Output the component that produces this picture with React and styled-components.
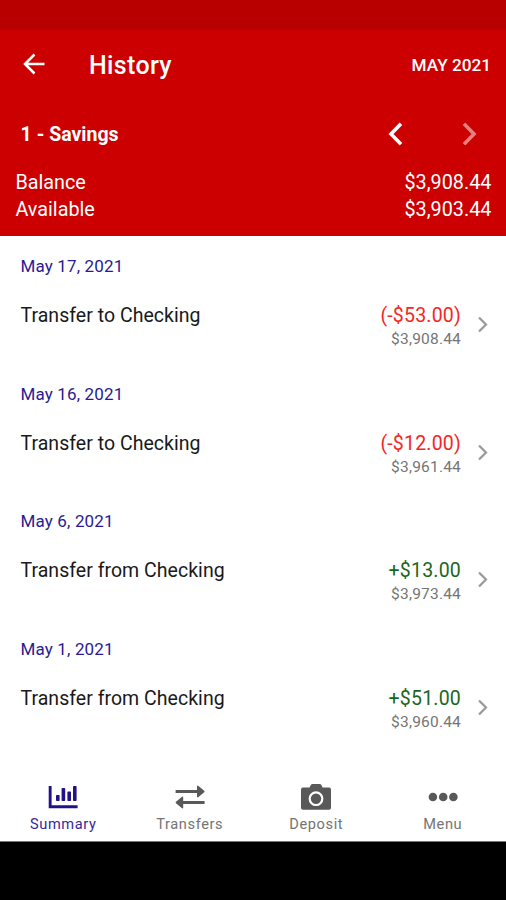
import React from 'react'
import styled, { createGlobalStyle } from 'styled-components'

const GlobalStyle = createGlobalStyle`
  * {
    box-sizing: border-box;
  }

  body {
    margin: 0;
    background: #000;
    font-family: Roboto, "Liberation Sans", sans-serif;
  }
`

const Screen = styled.div`
  display: flex;
  flex-direction: column;
  width: 506px;
  height: 900px;
  background: #fff;
  overflow: hidden;
`

const StatusBar = styled.div`
  height: 30px;
  background: #b90000;
`

const Header = styled.header`
  height: 206px;
  background: #cc0000;
  color: #fff;
`

const TitleBar = styled.div`
  display: flex;
  align-items: center;
  height: 70px;
  padding: 0 15px 0 23px;

  svg {
    margin-top: -2px;
  }
`

const Title = styled.h1`
  margin: 1px 0 0 44px;
  font-size: 25px;
  font-weight: 500;
  line-height: 30px;
  letter-spacing: 0.35px;
`

const Month = styled.span`
  margin: 0 0 0 auto;
  font-size: 17.2px;
  font-weight: 500;
`

const AccountBar = styled.div`
  display: flex;
  align-items: center;
  height: 69px;
  padding: 0 29px 1px 20.6px;

  svg + svg {
    margin-left: 59px;
    opacity: 0.5;
  }
`

const AccountName = styled.h2`
  flex: 1;
  margin: 0;
  font-size: 19.5px;
  font-weight: 700;
`

const BalanceLine = styled.div`
  display: flex;
  justify-content: space-between;
  padding: 0 14.6px 0 15.4px;
  font-size: 19.8px;
  line-height: 27px;
`

const History = styled.main`
  flex: 1;
`

const Entry = styled.section`
  height: 127.5px;
  padding: 18px 18px 0 20.5px;
`

const EntryDate = styled.div`
  font-size: 17px;
  line-height: 24px;
  letter-spacing: 0.15px;
  color: #2a1b91;
`

const EntryRow = styled.div`
  display: flex;
  margin-top: 24px;
`

const Description = styled.div`
  flex: 1;
  padding-top: 1px;
  font-size: 19.5px;
  line-height: 25px;
  letter-spacing: 0.03px;
  color: #191919;
`

const Figures = styled.div`
  text-align: right;
`

const Amount = styled.div`
  padding-top: 1px;
  font-size: 19.5px;
  line-height: 25px;
  letter-spacing: 0.2px;
  color: ${({ $credit }) => ($credit ? '#1b661d' : '#f52626')};
`

const Running = styled.div`
  font-size: 15.5px;
  line-height: 22px;
  letter-spacing: 0.2px;
  color: #757575;
`

const RowChevron = styled.svg`
  margin: 14px 0 0 16px;
`

const TabBar = styled.nav`
  display: flex;
  height: 74px;
  border-bottom: 1px solid #777;
`

const Tab = styled.div`
  flex: 1;
  display: flex;
  flex-direction: column;
  align-items: center;
  padding-top: 15px;
  color: ${({ $active }) => ($active ? '#21128c' : '#595959')};
`

const TabLabel = styled.span`
  margin-top: 4px;
  font-size: 14.6px;
  line-height: 18px;
  letter-spacing: 0.6px;
  color: ${({ $active }) => ($active ? '#37289c' : '#747474')};
`

const SystemBar = styled.div`
  height: 58px;
  background: #000;
`

const BackIcon = () => (
  <svg width="22" height="22" viewBox="0 0 22 22" fill="none" stroke="#fff" strokeWidth="2.5">
    <path d="M21.5 11H2.5M11.5 1.5L2 11l9.5 9.5" />
  </svg>
)

const PrevIcon = () => (
  <svg width="15" height="24" viewBox="0 0 15 24" fill="none" stroke="#fff" strokeWidth="3.6">
    <path d="M13 1.8L3 12l10 10.2" />
  </svg>
)

const NextIcon = () => (
  <svg width="15" height="24" viewBox="0 0 15 24" fill="none" stroke="#fff" strokeWidth="3.6">
    <path d="M2 1.8L12 12 2 22.2" />
  </svg>
)

const SummaryIcon = () => (
  <svg width="30" height="28" viewBox="0 0 30 28" fill="currentColor">
    <path d="M.7 3h2.9v19.2h26v3.1H.7z" />
    <rect x="8" y="12" width="3.6" height="6" rx=".8" />
    <rect x="13.6" y="5" width="3.6" height="13" rx=".8" />
    <rect x="19.4" y="8.6" width="3.6" height="9.4" rx=".8" />
    <rect x="25" y="3" width="3.6" height="15" rx=".8" />
  </svg>
)

const TransfersIcon = () => (
  <svg width="30" height="28" viewBox="0 0 30 28" fill="currentColor">
    <path d="M.6 7h21.4V3.6Q22 1.900 23.5 2.900L29.2 7.700Q30 8.500 29.2 9.300L23.5 14.100Q22 15.100 22 13.400V10H.6z" />
    <path d="M29.6 18H8.200V14.600Q8.200 12.900 6.700 13.900L1 18.700Q.2 19.500 1 20.300L6.700 25.100Q8.200 26.100 8.200 24.400V21H29.6z" />
  </svg>
)

const DepositIcon = () => (
  <svg width="30" height="28" viewBox="0 0 30 28" fill="currentColor">
    <path d="M2 4.6h6.500l1.300-2.700Q10.300 1 11.400 1h7.400q1.100 0 1.600.9l1.200 2.700H28q2 0 2 2v18.200q0 2-2 2H2q-2 0-2-2V6.600q0-2 2-2z" />
    <circle cx="15" cy="15.7" r="6.3" fill="none" stroke="#fff" strokeWidth="2.2" />
  </svg>
)

const MenuIcon = () => (
  <svg width="30" height="28" viewBox="0 0 30 28" fill="currentColor">
    <circle cx="4.9" cy="14" r="4.3" />
    <circle cx="15.2" cy="14" r="4.3" />
    <circle cx="25.4" cy="14" r="4.3" />
  </svg>
)

const entries = [
  { date: 'May 17, 2021', text: 'Transfer to Checking', amount: '(-$53.00)', running: '$3,908.44' },
  { date: 'May 16, 2021', text: 'Transfer to Checking', amount: '(-$12.00)', running: '$3,961.44' },
  { date: 'May 6, 2021', text: 'Transfer from Checking', amount: '+$13.00', running: '$3,973.44', credit: true },
  { date: 'May 1, 2021', text: 'Transfer from Checking', amount: '+$51.00', running: '$3,960.44', credit: true },
]

const tabs = [
  { label: 'Summary', Icon: SummaryIcon, active: true },
  { label: 'Transfers', Icon: TransfersIcon },
  { label: 'Deposit', Icon: DepositIcon },
  { label: 'Menu', Icon: MenuIcon },
]

const App = () => {
  return (
    <>
      <GlobalStyle />
      <Screen>
        <StatusBar />
        <Header>
          <TitleBar>
            <BackIcon />
            <Title>History</Title>
            <Month>MAY 2021</Month>
          </TitleBar>
          <AccountBar>
            <AccountName>1 - Savings</AccountName>
            <PrevIcon />
            <NextIcon />
          </AccountBar>
          <BalanceLine>
            <span>Balance</span>
            <span>$3,908.44</span>
          </BalanceLine>
          <BalanceLine>
            <span>Available</span>
            <span>$3,903.44</span>
          </BalanceLine>
        </Header>

        <History>
          {entries.map((entry) => (
            <Entry key={entry.date}>
              <EntryDate>{entry.date}</EntryDate>
              <EntryRow>
                <Description>{entry.text}</Description>
                <Figures>
                  <Amount $credit={entry.credit}>{entry.amount}</Amount>
                  <Running>{entry.running}</Running>
                </Figures>
                <RowChevron width="11" height="17" viewBox="0 0 11 17" fill="none" stroke="#999" strokeWidth="2.2">
                  <path d="M2 1.5l7 7-7 7" />
                </RowChevron>
              </EntryRow>
            </Entry>
          ))}
        </History>

        <TabBar>
          {tabs.map(({ label, Icon, active }) => (
            <Tab key={label} $active={active}>
              <Icon />
              <TabLabel $active={active}>{label}</TabLabel>
            </Tab>
          ))}
        </TabBar>
        <SystemBar />
      </Screen>
    </>
  )
}

export default App
